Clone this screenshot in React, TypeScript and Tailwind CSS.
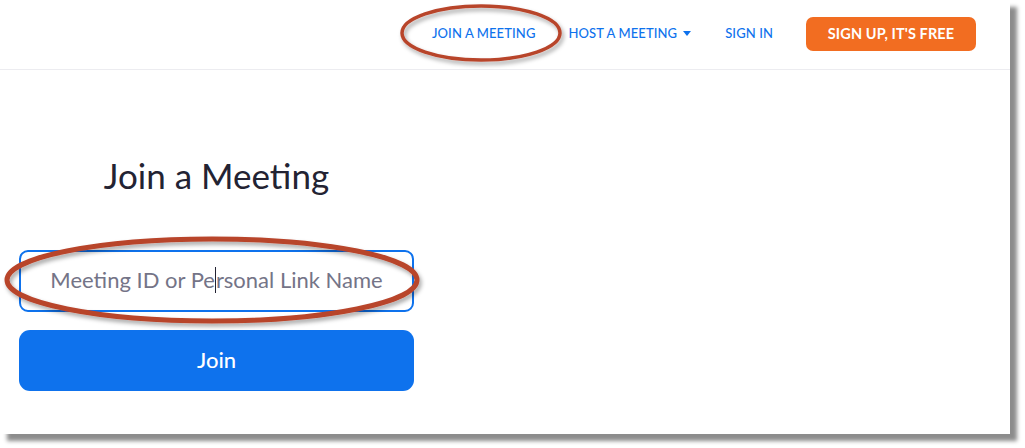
import { ChevronDown } from 'lucide-react';

const font = { fontFamily: 'Lato, "Open Sans", sans-serif' };

function NavBar() {
  return (
    <header className="h-[70px] pb-[2px] border-b border-[#ececf0] flex items-center justify-end pr-[34px]">
      <nav className="flex items-center text-[13px] font-medium text-[#0e72ed] tracking-[0.1px]">
        <a className="mr-[33px]">JOIN A MEETING</a>
        <a className="mr-[34px] flex items-center">
          HOST A MEETING
          <svg width="8" height="5" viewBox="0 0 8 5" className="ml-[6px]">
            <path d="M0 0h8L4 5z" fill="#0e72ed" />
          </svg>
        </a>
        <a className="mr-[33px]">SIGN IN</a>
        <button className="h-[34px] w-[170px] rounded-[7px] bg-[#f26d21] text-white text-[14.5px] font-bold">
          SIGN UP, IT'S FREE
        </button>
      </nav>
    </header>
  );
}

function Annotations() {
  return (
    <svg className="absolute inset-0 pointer-events-none" width="1025" height="448">
      <defs>
        <filter id="sh" x="-10%" y="-30%" width="120%" height="160%">
          <feDropShadow dx="2" dy="3" stdDeviation="2" floodColor="#000" floodOpacity="0.35" />
        </filter>
      </defs>
      <ellipse cx="481" cy="33" rx="79" ry="27" fill="none" stroke="#b8442c" strokeWidth="3.5" filter="url(#sh)" />
      <ellipse cx="212" cy="280" rx="205" ry="41" fill="none" stroke="#b8442c" strokeWidth="5" filter="url(#sh)" />
    </svg>
  );
}

export default function App() {
  return (
    <div className="w-[1025px] h-[448px] bg-white relative" style={font}>
      <div className="w-[1010px] h-[434px] bg-white shadow-[7px_7px_4px_rgba(0,0,0,0.45)] overflow-hidden">
        <NavBar />
        <main className="ml-[19px] w-[395px] pt-[84px] flex flex-col">
          <h1 className="text-center text-[35px] leading-[42px] text-[#232333] font-normal">Join a Meeting</h1>
          <div className="mt-[54px] h-[62px] pb-[3px] rounded-[9px] border-2 border-[#0e72ed] flex items-center justify-center text-[22px] text-[#747487]">
            <span>Meeting ID or Pe</span>
            <span className="inline-block w-[1px] h-[26px] bg-[#232333]" />
            <span>rsonal Link Name</span>
          </div>
          <button className="mt-[18px] h-[61px] pb-[3px] rounded-[11px] bg-[#0e72ed] text-white text-[22px] font-medium">
            Join
          </button>
        </main>
      </div>
      <Annotations />
    </div>
  );
}
